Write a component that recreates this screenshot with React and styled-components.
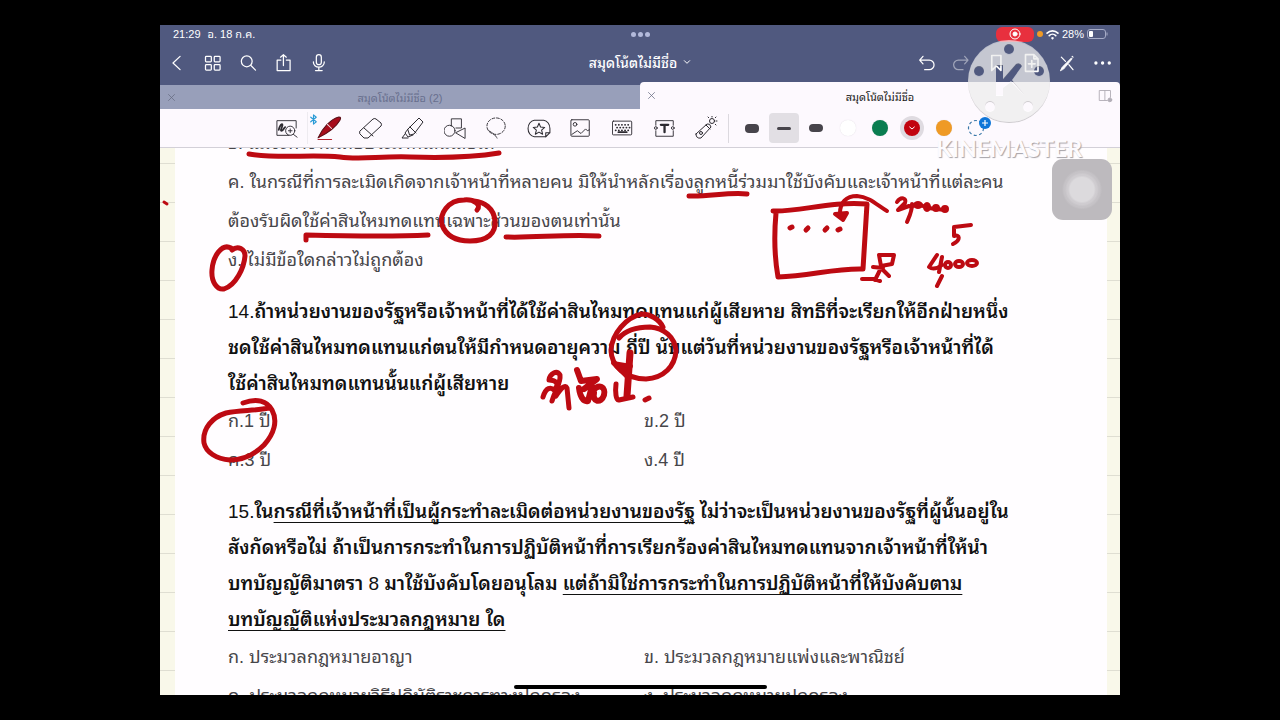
import React from "react";
import styled, { createGlobalStyle } from "styled-components";

const GlobalStyle = createGlobalStyle`
    * {
        box-sizing: border-box;
    }
    body {
        margin: 0;
        background: #000;
        font-family: "Liberation Sans", "Noto Sans Thai Looped", Loma, Garuda, Waree, "Noto Sans Thai", "Noto Sans", sans-serif;
    }
    button {
        padding: 0;
        border: none;
        background: none;
        font: inherit;
        color: inherit;
    }
`;

const Icon = ({ size = 20, width = 1.5, children, ...rest }) => (
    <svg
        width={size}
        height={size}
        viewBox="0 0 24 24"
        fill="none"
        stroke="currentColor"
        strokeWidth={width}
        strokeLinecap="round"
        strokeLinejoin="round"
        aria-hidden="true"
        {...rest}
    >
        {children}
    </svg>
);

const leftActions = [
    { label: "ย้อนกลับ", icon: <path d="M14.500 4 6 12l8.500 8" /> },
    {
        label: "หน้าทั้งหมด",
        icon: (
            <>
                <rect x="3" y="4" width="7" height="6.500" rx="1" />
                <rect x="13.500" y="4" width="7" height="6.500" rx="1" />
                <rect x="3" y="14" width="7" height="6.500" rx="1" />
                <rect x="13.500" y="14" width="7" height="6.500" rx="1" />
            </>
        ),
    },
    { label: "ค้นหา", icon: <><circle cx="10.500" cy="10" r="6.500" /><path d="m15.500 15 5.500 5.500" /></> },
    { label: "แชร์", icon: <><path d="M9.500 8.500H5V21h15.500V8.500H16" /><path d="M12.500 15V2M9 5l3.500-3L16 5" /></> },
    {
        label: "บันทึกเสียง",
        icon: <><rect x="10" y="2" width="6" height="12" rx="3" /><path d="M6.500 10.500v.5a6.500 6 0 0 0 13 0v-.5M13 17v4M9 21h8" /></>,
    },
];

const rightActions = [
    { label: "เลิกทำ", icon: <path d="M6 4 2 8.500 6 13M2 8.500h11.500a5.500 5.500 0 0 1 0 11.500H8" /> },
    { label: "ทำซ้ำ", dim: true, icon: <path d="M14 4 18 8.500 14 13M18 8.500H6.500a5.500 5.500 0 0 0 0 11.500H12" /> },
    { label: "คั่นหน้า", icon: <path strokeWidth="2" d="M4.500 3h11v18L10 15.500 4.500 21z" /> },
    { label: "เพิ่มหน้า", icon: <g strokeWidth="2"><path d="M3 2h10l5 5v15H3zM13 2v5h5" /><path d="M10.500 9v8M6.500 13h8" /></g> },
    {
        label: "อ่านอย่างเดียว",
        icon: (
            <>
                <path d="m4 5 5 5M13 14l5 6" />
                <path fill="currentColor" strokeWidth="1" d="m3 21 2-4L16 6l1 1L7 19z" />
                <path d="m17 4 1 1" />
            </>
        ),
    },
    { label: "เพิ่มเติม", icon: <path strokeWidth="4" d="M3.500 12h.01M11.500 12h.01M19.500 12h.01" /> },
];

const tools = [
    {
        label: "ซูม",
        icon: (
            <>
                <path d="M14 20H1V4h21v8" />
                <path strokeWidth="2" d="M3 14c1-4 3-7 4-6s-3 7-1 7 3-4 4-4" />
                <circle cx="15.500" cy="15" r="5" />
                <path d="M15.500 13v4M13.500 15h4M19 19l4 3" />
            </>
        ),
    },
    {
        label: "ปากกา",
        size: 25,
        icon: (
            <>
                <path fill="#a80d1c" stroke="#5a1018" strokeWidth="1" d="M1 21C5 12 13 3 21 1c2 0 2 1 1 3-4 7-11 12-21 17z" />
                <path stroke="#f4dfe2" strokeWidth="1" d="m10 8 4 4" />
                <path stroke="#b51f2c" strokeWidth="1" d="M1 22.500h13" />
            </>
        ),
    },
    { label: "ยางลบ", size: 24, icon: <path d="m1 15 13-12q2-1 3 0l5 4q1 2 0 3L9 22H5l-4-4zM5 12l9 8" /> },
    { label: "ปากกาเน้นข้อความ", size: 24, icon: <path d="M7 13 18 2l4 4-9 12-4 1zM7 13l-3 4 3 4 5-2M4 18l-3 4h6M9 11l6 6" /> },
    { label: "รูปร่าง", icon: <><path d="M8 10V2h11v10h-6" /><circle cx="6" cy="15" r="6" /><path d="m13 17 10-5v11z" /></> },
    { label: "บ่วง", icon: <><ellipse cx="11" cy="10" rx="10" ry="9" strokeDasharray="3 2" /><path d="M3 15c2 1 7 4 9 8" strokeDasharray="3 1" /></> },
    {
        label: "สติกเกอร์",
        size: 25,
        icon: (
            <>
                <path d="M18 20H7a7 8 0 0 1-6-8 7 8 0 0 1 6-8h9a7 8 0 0 1 6 8v4l-4 4v-4h4" />
                <path d="m11.500 7 1.500 3.500 4 .5-3 2.500 1 4-3.500-2-3.500 2 1-4-3-2.500 4-.5z" />
            </>
        ),
    },
    { label: "รูปภาพ", icon: <><rect x="1" y="3" width="20" height="18" rx="1" /><circle cx="5.500" cy="8" r="2" /><path d="m2 19 6-4 4 3 5-5 2 2 2-1" /></> },
    {
        label: "แป้นพิมพ์",
        icon: (
            <>
                <rect x="0.500" y="4.500" width="21" height="15" rx="1" />
                <path strokeWidth="2" strokeDasharray="0.1 3.300" d="M4 8.500h16M5.500 11.500h14M4 14.500h16" />
                <path strokeWidth="2" d="M7 16.500h9" />
            </>
        ),
    },
    {
        label: "ข้อความ",
        icon: (
            <>
                <path d="M2 9V4h19v5M2 15v6h19v-6" />
                <circle cx="2" cy="12" r="1.500" />
                <circle cx="20.500" cy="12" r="1.500" />
                <path strokeWidth="2.500" d="M7.500 8.500h8M11.500 8.500v8" />
            </>
        ),
    },
    {
        label: "เลเซอร์",
        size: 24,
        icon: (
            <>
                <path d="m1 18 11-10q3-1 4 3L6 22q-5 1-5-4zM11 9l4 4" />
                <circle cx="6" cy="17" r="1.500" />
                <circle cx="17" cy="5" r="2.500" />
                <path strokeDasharray="1 1.500" d="M17 0v1M21 1l-1 1M22 5h-1M21 9l-1-1M13 1l1 1" />
            </>
        ),
    },
];

const strokes = [
    { label: "เส้นหนา", width: 14, height: 9 },
    { label: "เส้นบาง", width: 14, height: 3, active: true },
    { label: "เส้นกลาง", width: 14, height: 8 },
];

const colors = [
    { label: "ขาว", value: "#ffffff" },
    { label: "เขียว", value: "#0a7d50" },
    { label: "แดง", value: "#c2040f", active: true },
    { label: "ส้ม", value: "#ef9a25" },
];

const StatusBar = () => (
    <Status>
        <StatusSide>
            <span>21:29</span>
            <span>อ. 18 ก.ค.</span>
        </StatusSide>
        <Dots>
            <Dot />
            <Dot />
            <Dot />
        </Dots>
        <StatusSide $end>
            <Recording>
                <Icon size={12} width={2}>
                    <circle cx="12" cy="12" r="10" />
                    <circle cx="12" cy="12" r="4" fill="currentColor" />
                </Icon>
            </Recording>
            <Dot $color="#ef9a25" />
            <Icon size={13} width={3}>
                <path d="M2 9.500a14 14 0 0 1 20 0M6 14a8.500 8.500 0 0 1 12 0M11 18.500l1 1 1-1a1.500 1.500 0 0 0-2 0z" />
            </Icon>
            <span>28%</span>
            <svg width="21" height="10" viewBox="0 0 21 10" aria-hidden="true">
                <rect x="0.500" y="0.500" width="18" height="9" rx="2.500" fill="none" stroke="#a5abc6" />
                <rect x="2" y="2" width="4" height="6" rx="1" fill="#fff" />
                <path d="M20 3.500v3" stroke="#a5abc6" />
            </svg>
        </StatusSide>
    </Status>
);

const Ink = () => (
    <InkLayer width="960" height="547" viewBox="160 148 960 547" aria-hidden="true">
        <path d="M249 154C280 159 310 154 340 157C360 160 380 156 410 157C440 158 475 157 499 153" />
        <path d="M164 202L167 204" strokeWidth="3" />
        <path d="M689 196C708 197 728 192 747 194" />
        <path d="M306 240V235C345 236 390 237 428 235" />
        <path d="M506 237C535 238 565 234 599 236" />
        <path d="M477 210C482 205 474 199 464 200C448 200 439 214 442 225C447 238 460 241 470 241C488 241 496 233 495 221C494 208 484 202 474 201" />
        <path d="M231 248C222 243 213 256 212 270C211 282 217 290 224 289C236 285 244 268 245 256C245 249 238 245 232 250" />

        {/* box with the arrow going in */}
        <path d="M773 211C800 212 830 201 867 204L863 269C835 268 810 276 778 277C775 260 774 235 776 213" />
        <path strokeWidth="4" d="M840 213C840 203 846 196 857 196C870 197 878 206 887 211" />
        <path fill="#bd0a12" strokeWidth="4" d="M835 214L847 213L843 220Z" />
        <path d="M790 228L792 227M806 230L808 228M825 230L827 228M838 230L840 229" />

        {/* little man */}
        <path strokeWidth="4" d="M879 255H894L892 264L881 266ZM873 267L883 268M881 268L875 280M883 270L889 276M862 279H874L880 281" />

        {/* 20,000 / 5 = 4,000 */}
        <path strokeWidth="4" d="M897 202C901 196 907 198 905 203L898 210L909 206M912 204C912 212 909 217 907 222" />
        <g fill="#bd0a12" strokeWidth="4">
            <ellipse cx="918" cy="205" rx="3" ry="2" />
            <ellipse cx="927" cy="207" rx="2" ry="3" />
            <ellipse cx="936" cy="208" rx="2" ry="2" />
            <ellipse cx="945" cy="209" rx="2" ry="2" />
            <path d="M912 206L918 204L928 208L945 210" />
        </g>
        <path strokeWidth="4" d="M971 225L954 227V236C960 234 961 240 953 244" />
        <path strokeWidth="4" d="M937 255L929 267C933 270 938 268 942 265M942 257L939 272M942 276L937 286" />
        <g strokeWidth="4">
            <ellipse cx="948" cy="265" rx="3" ry="3" />
            <ellipse cx="959" cy="264" rx="4" ry="3" />
            <ellipse cx="972" cy="263" rx="5" ry="3" />
        </g>

        <path d="M243 403C257 398 267 401 272 410C278 421 274 434 264 445C255 454 244 460 230 460C216 459 206 452 204 443C202 428 213 417 226 413C240 410 255 411 269 408" />
        <path d="M663 327C659 319 650 314 642 314C626 317 612 334 611 350C611 366 626 379 646 379C664 378 675 366 676 351C675 337 664 328 650 327C636 327 625 331 619 338" />

        {/* handwritten note beside the circle */}
        <path d="M543 397C546 387 551 387 554 390C560 384 556 380 549 380C550 373 557 370 560 375C561 383 556 388 552 401M556 396C561 388 565 384 567 388L569 408" />
        <path strokeWidth="6" d="M577 370L581 381L597 379L584 389M579 388C580 396 583 402 588 401L592 386M593 391C599 383 606 387 604 395C601 404 592 402 594 393" />
        <path d="M616 384C615 392 616 401 619 400L633 397" />
        <path strokeWidth="7" d="M630 353L627 396" />
        <path fill="#bd0a12" strokeWidth="4" d="M613 363L631 366L626 376Z" />
        <path d="M645 400L649 398" />
    </InkLayer>
);

const Watermark = () => (
    <Brand>
        <svg width="86" height="86" viewBox="0 0 86 86" aria-hidden="true">
            <defs>
                <mask id="holes">
                    <rect width="86" height="86" fill="#fff" />
                    <g fill="#000">
                        <circle cx="43" cy="10" r="5" />
                        <circle cx="13" cy="32" r="5" />
                        <circle cx="73" cy="32" r="5" />
                        <circle cx="24" cy="67" r="5" />
                        <circle cx="62" cy="67" r="5" />
                        <path d="M30 26h7v14l13-15q4-2 6 2L46 41l12 14-13-13-8 6v8h-7z" />
                    </g>
                </mask>
                <filter id="edge">
                    <feDropShadow dx="0" dy="1" stdDeviation="0.600" floodColor="#777" floodOpacity="0.6" />
                </filter>
            </defs>
            <g filter="url(#edge)">
                <circle cx="43" cy="42" r="41" fill="#fff" fillOpacity="0.6" mask="url(#holes)" />
            </g>
        </svg>
        <BrandName>KINEMASTER</BrandName>
    </Brand>
);

const App = () => {
    return (
        <Page>
            <GlobalStyle />
            <Screen>
                <Header>
                    <StatusBar />
                    <NavBar>
                        <Actions>
                            {leftActions.map((a) => (
                                <NavButton key={a.label} aria-label={a.label}>
                                    <Icon>{a.icon}</Icon>
                                </NavButton>
                            ))}
                        </Actions>
                        <Title>
                            สมุดโน้ตไม่มีชื่อ
                            <Icon size={8} width={3}>
                                <path d="m4 8 8 8 8-8" />
                            </Icon>
                        </Title>
                        <Actions $end>
                            {rightActions.map((a) => (
                                <NavButton key={a.label} aria-label={a.label} $dim={a.dim}>
                                    <Icon>{a.icon}</Icon>
                                </NavButton>
                            ))}
                        </Actions>
                    </NavBar>
                </Header>
                <Tabs>
                    <Tab>
                        <TabClose aria-label="ปิดแท็บ">
                            <Icon size={9} width={2}><path d="m4 4 16 16M20 4 4 20" /></Icon>
                        </TabClose>
                        <TabName>สมุดโน้ตไม่มีชื่อ (2)</TabName>
                        <TabEnd />
                    </Tab>
                    <Tab $active>
                        <TabClose aria-label="ปิดแท็บ">
                            <Icon size={9} width={2}><path d="m4 4 16 16M20 4 4 20" /></Icon>
                        </TabClose>
                        <TabName>สมุดโน้ตไม่มีชื่อ</TabName>
                        <TabEnd aria-label="แบ่งหน้าจอ">
                            <Icon size={15} width={1.5}>
                                <path d="M15 20H2V4h18v11M11 4v16" />
                                <circle cx="19" cy="19" r="3" fill="currentColor" />
                            </Icon>
                        </TabEnd>
                    </Tab>
                </Tabs>
                <Toolbar>
                    {tools.map((t) => (
                        <Tool key={t.label} aria-label={t.label}>
                            <Icon size={t.size || 22} width={1}>{t.icon}</Icon>
                            {t.label === "ปากกา" && (
                                <Bluetooth size={11} width={2.5}>
                                    <path d="m6 7 12 10-6 5V2l6 5L6 17" />
                                </Bluetooth>
                            )}
                        </Tool>
                    ))}
                    <Divider />
                    {strokes.map((s) => (
                        <Stroke key={s.label} aria-label={s.label} $active={s.active}>
                            <StrokeMark $w={s.width} $h={s.height} />
                        </Stroke>
                    ))}
                    {colors.map((c) => (
                        <Swatch key={c.label} aria-label={c.label}>
                            <SwatchDot $color={c.value} $active={c.active}>
                                {c.active && <Icon size={8} width={3}><path d="m5 9 7 6 7-6" /></Icon>}
                            </SwatchDot>
                        </Swatch>
                    ))}
                    <AddColor aria-label="เพิ่มสี">
                        <svg width="24" height="24" viewBox="0 0 24 24" aria-hidden="true">
                            <circle cx="9" cy="12" r="7.500" fill="none" stroke="#3a78a8" strokeWidth="1.200" strokeDasharray="3 2.500" />
                            <circle cx="18" cy="7" r="6" fill="#0f76d8" />
                            <path d="M15 7h6M18 4v6" stroke="#fff" strokeWidth="1.200" />
                        </svg>
                    </AddColor>
                </Toolbar>
                <Canvas>
                    <Paper>
                        <Line $first>ข. แม้จะทำงานโดยประมาทเลินเล่อได้</Line>
                        <Line>ค. ในกรณีที่การละเมิดเกิดจากเจ้าหน้าที่หลายคน มิให้นำหลักเรื่องลูกหนี้ร่วมมาใช้บังคับและเจ้าหน้าที่แต่ละคน</Line>
                        <Line>ต้องรับผิดใช้ค่าสินไหมทดแทนเฉพาะส่วนของตนเท่านั้น</Line>
                        <Line>ง. ไม่มีข้อใดกล่าวไม่ถูกต้อง</Line>
                        <Question>
                            <Num>14.</Num>ถ้าหน่วยงานของรัฐหรือเจ้าหน้าที่ได้ใช้ค่าสินไหมทดแทนแก่ผู้เสียหาย สิทธิที่จะเรียกให้อีกฝ่ายหนึ่ง
                            <br />
                            ชดใช้ค่าสินไหมทดแทนแก่ตนให้มีกำหนดอายุความ กี่ปี นับแต่วันที่หน่วยงานของรัฐหรือเจ้าหน้าที่ได้
                            <br />
                            ใช้ค่าสินไหมทดแทนนั้นแก่ผู้เสียหาย
                        </Question>
                        <Choices>
                            <Line>ก.1 ปี</Line>
                            <Line>ข.2 ปี</Line>
                            <Line>ค.3 ปี</Line>
                            <Line>ง.4 ปี</Line>
                        </Choices>
                        <Question>
                            <Num>15.</Num>ใน<u>กรณีที่เจ้าหน้าที่เป็นผู้กระทำละเมิดต่อหน่วยงานของรัฐ</u> ไม่ว่าจะเป็นหน่วยงานของรัฐที่ผู้นั้นอยู่ใน
                            <br />
                            สังกัดหรือไม่ ถ้าเป็นการกระทำในการปฏิบัติหน้าที่การเรียกร้องค่าสินไหมทดแทนจากเจ้าหน้าที่ให้นำ
                            <br />
                            บทบัญญัติมาตรา <Num>8</Num> มาใช้บังคับโดยอนุโลม <u>แต่ถ้ามิใช่การกระทำในการปฏิบัติหน้าที่ให้บังคับตาม</u>
                            <br />
                            <u>บทบัญญัติแห่งประมวลกฎหมาย ใด</u>
                        </Question>
                        <Choices>
                            <Line>ก. ประมวลกฎหมายอาญา</Line>
                            <Line>ข. ประมวลกฎหมายแพ่งและพาณิชย์</Line>
                            <Line>ค. ประมวลกฎหมายวิธีปฏิบัติราชการทางปกครอง</Line>
                            <Line>ง. ประมวลกฎหมายปกครอง</Line>
                        </Choices>
                    </Paper>
                    <Ink />
                </Canvas>
                <Watermark />
                <AssistiveTouch aria-label="AssistiveTouch" />
                <HomeIndicator />
            </Screen>
        </Page>
    );
};

const Page = styled.div`
    height: 100vh;
    padding: 25px 0;
    background: #000;
`;

const Screen = styled.div`
    position: relative;
    display: flex;
    flex-direction: column;
    width: 75%;
    height: 100%;
    margin: 0 auto;
    overflow: hidden;
    background: #fff;
`;

const Header = styled.header`
    height: 60px;
    background: #50597f;
    color: #fff;
`;

const Status = styled.div`
    display: grid;
    grid-template-columns: 1fr auto 1fr;
    align-items: center;
    height: 18px;
    padding: 0 12px 0 13px;
    font-size: 11px;
`;

const StatusSide = styled.div`
    display: flex;
    align-items: ${(props) => (props.$end ? "center" : "baseline")};
    justify-content: ${(props) => (props.$end ? "flex-end" : "flex-start")};
    gap: ${(props) => (props.$end ? "3px" : "7px")};
    line-height: 18px;
`;

const Dots = styled.div`
    display: flex;
    gap: 2px;
`;

const Dot = styled.span`
    width: ${(props) => (props.$color ? "6px" : "5px")};
    height: ${(props) => (props.$color ? "6px" : "5px")};
    border-radius: 50%;
    background: ${(props) => props.$color || "#b3badb"};
`;

const Recording = styled.span`
    display: flex;
    align-items: center;
    justify-content: center;
    width: 38px;
    height: 15px;
    border-radius: 6px;
    background: #e8303e;
`;

const NavBar = styled.nav`
    display: grid;
    grid-template-columns: 1fr auto 1fr;
    align-items: center;
    height: 40px;
`;

const Actions = styled.div`
    display: flex;
    justify-content: ${(props) => (props.$end ? "flex-end" : "flex-start")};
`;

const NavButton = styled.button`
    display: flex;
    align-items: center;
    justify-content: center;
    width: 35px;
    height: 40px;
    opacity: ${(props) => (props.$dim ? 0.45 : 1)};
`;

const Title = styled.button`
    display: flex;
    align-items: center;
    gap: 6px;
    padding-bottom: 3px;
    font-size: 14px;
    font-weight: 500;
`;

const Tabs = styled.div`
    display: flex;
    align-items: flex-end;
    height: 24px;
    background: #50597f;
`;

const Tab = styled.div`
    display: flex;
    align-items: center;
    flex: 1;
    height: ${(props) => (props.$active ? "27px" : "24px")};
    padding: 0 7px;
    border-radius: ${(props) => (props.$active ? "4px 4px 0 0" : "0")};
    background: ${(props) => (props.$active ? "#fdf9fe" : "#989fba")};
    color: ${(props) => (props.$active ? "#222" : "#686f8e")};
    font-size: 11px;
`;

const TabClose = styled.button`
    display: flex;
    width: 20px;
    color: #666b80;
`;

const TabName = styled.span`
    flex: 1;
    text-align: center;
`;

const TabEnd = styled.button`
    display: flex;
    justify-content: flex-end;
    width: 20px;
    color: #b3afb8;
`;

const Toolbar = styled.div`
    display: flex;
    align-items: center;
    justify-content: center;
    flex-shrink: 0;
    height: 39px;
    padding-right: 16px;
    border-bottom: 1px solid #d3d0d8;
    background: #fdf9fe;
    color: #2c2a30;
`;

const Tool = styled.button`
    position: relative;
    display: flex;
    align-items: center;
    justify-content: center;
    width: 42px;
    height: 32px;

    &:first-child {
        box-shadow: inset -1px 0 #eeebf0;
    }
`;

const Bluetooth = styled(Icon)`
    position: absolute;
    top: 2px;
    left: 0;
    color: #2a9bd6;
`;

const Divider = styled.span`
    width: 1px;
    height: 29px;
    margin-right: 7px;
    background: #dcd9df;
`;

const Stroke = styled.button`
    display: flex;
    align-items: center;
    justify-content: center;
    width: 30px;
    height: 30px;
    margin: 0 1px;
    border-radius: 4px;
    background: ${(props) => (props.$active ? "#e2dfe4" : "transparent")};
`;

const StrokeMark = styled.span`
    width: ${(props) => props.$w}px;
    height: ${(props) => props.$h}px;
    border-radius: 4px;
    background: #47444b;
`;

const Swatch = styled.button`
    display: flex;
    align-items: center;
    justify-content: center;
    width: 32px;
    height: 32px;
`;

const SwatchDot = styled.span`
    display: flex;
    align-items: center;
    justify-content: center;
    width: 16px;
    height: 16px;
    border-radius: 50%;
    background: ${(props) => props.$color};
    box-shadow: ${(props) => (props.$active ? "0 0 0 4px #dfdbe1" : "0 0 1px #d8d5da")};
    color: #fff;
`;

const AddColor = styled.button`
    display: flex;
    align-items: center;
    justify-content: center;
    width: 38px;
    height: 32px;
`;

const Canvas = styled.main`
    position: relative;
    flex: 1;
    min-height: 0;
    padding: 0 13px 0 15px;
    background: repeating-linear-gradient(#f9f8ea 0 38px, #dfded2 38px 39px) 0 -23px;
    overflow: hidden;
`;

const Paper = styled.article`
    height: 100%;
    padding: 0 47px 0 53px;
    overflow: hidden;
    background: #fffdff;
`;

const Line = styled.p`
    height: 39px;
    margin: ${(props) => (props.$first ? "-24px 0 0" : "0")};
    color: #47464a;
    font-size: 18px;
    line-height: 39px;
    white-space: nowrap;
`;

const Question = styled.h2`
    margin: 14px 0 0;
    color: #111;
    font-size: 19px;
    font-weight: 600;
    line-height: 36px;
    white-space: nowrap;

    u {
        text-decoration-thickness: 1px;
        text-underline-offset: 4px;
        text-decoration-skip-ink: none;
    }
`;

const Num = styled.span`
    font-weight: normal;
`;

const Choices = styled.div`
    display: grid;
    grid-template-columns: 1fr 1fr;
`;

const InkLayer = styled.svg`
    position: absolute;
    top: 0;
    left: 0;
    fill: none;
    stroke: #bd0a12;
    stroke-width: 5px;
    stroke-linecap: round;
    stroke-linejoin: round;
`;

const Brand = styled.div`
    position: absolute;
    top: 14px;
    right: 38px;
    display: flex;
    flex-direction: column;
    align-items: center;
    gap: 9px;
    pointer-events: none;
`;

const BrandName = styled.span`
    color: #fdfbfe;
    font-family: Lato, sans-serif;
    font-size: 23px;
    font-weight: bold;
    line-height: 28px;
    text-shadow: 1px 1px 1px #a5a2a8;
`;

const AssistiveTouch = styled.button`
    position: absolute;
    top: 134px;
    right: 8px;
    width: 60px;
    height: 61px;
    border-radius: 11px;
    background: radial-gradient(circle, #dcdadd 0 12px, #cfccd0 14px 15px, #c6c3c7 17px 18px, #bdbabe 20px);
`;

const HomeIndicator = styled.div`
    position: absolute;
    bottom: 6px;
    left: 50%;
    width: 253px;
    height: 4px;
    margin-left: -126px;
    border-radius: 2px;
    background: #000;
`;

export default App;
